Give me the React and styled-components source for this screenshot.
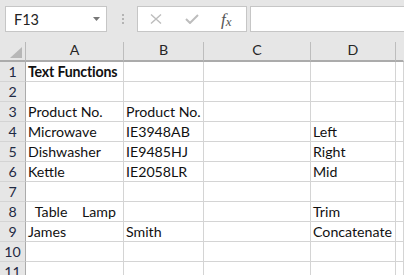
import React from 'react';
import styled, { createGlobalStyle } from 'styled-components';

const Global = createGlobalStyle`
  html, body { margin: 0; padding: 0; background: #e6e6e6; }
  body { font-family: Lato, "Liberation Sans", sans-serif; overflow: hidden; }
`;

const Page = styled.div`
  width: 404px;
  height: 275px;
  overflow: hidden;
  background: #fff;
`;

const Toolbar = styled.div`
  display: flex;
  align-items: flex-start;
  height: 42px;
  box-sizing: border-box;
  padding: 6px 0 0 5px;
  background: #e6e6e6;
`;

const NameBox = styled.div`
  width: 102px;
  height: 26px;
  box-sizing: border-box;
  border: 1px solid #c6c6c6;
  background: #fff;
  display: flex;
  align-items: center;
  justify-content: space-between;
  padding: 0 6px 0 8px;
  font-size: 14.5px;
  color: #222;
`;

const Dots = styled.div`
  margin: 8px 13px 0 15px;
  display: flex;
  flex-direction: column;
  gap: 2px;
  span {
    width: 2px;
    height: 2px;
    background: #b4b4b4;
  }
`;

const ButtonBox = styled.div`
  width: 110px;
  height: 26px;
  box-sizing: border-box;
  border: 1px solid #c6c6c6;
  background: #fff;
  display: flex;
  align-items: center;
  padding-left: 12px;
  gap: 23px;
`;

const FxLabel = styled.span`
  font-family: "Liberation Serif", serif;
  font-style: italic;
  font-size: 17px;
  line-height: 1;
  color: #555;
  margin-left: -1px;
  sub {
    font-size: 13px;
    vertical-align: -1px;
  }
`;

const FormulaInput = styled.div`
  flex: 1;
  height: 26px;
  margin-left: 3px;
  box-sizing: border-box;
  border: 1px solid #c6c6c6;
  border-right: none;
  background: #fff;
`;

const Grid = styled.div`
  display: grid;
  grid-template-columns: 26px 98px 80px 107px 85px 1fr;
  grid-auto-rows: 20px;
`;

const Corner = styled.div`
  background: #e6e6e6;
  border-right: 1px solid #b9b9b9;
  border-bottom: 2px solid #ababab;
  position: relative;
  svg { position: absolute; right: 3px; bottom: 2px; }
`;

const ColHead = styled.div`
  background: #e6e6e6;
  border-right: 1px solid ${p => (p.$last ? 'transparent' : '#bdbdbd')};
  border-bottom: 2px solid #ababab;
  display: flex;
  align-items: flex-end;
  justify-content: center;
  font-size: 14.2px;
  line-height: 18px;
  color: #262626;
  padding-bottom: 1px;
  box-sizing: border-box;
`;

const RowHead = styled.div`
  background: #e6e6e6;
  border-right: 1px solid #ababab;
  border-bottom: 1px solid #d4d4d4;
  display: flex;
  align-items: flex-end;
  justify-content: center;
  font-size: 14.2px;
  line-height: 18px;
  color: #1f2a44;
  box-sizing: border-box;
`;

const Cell = styled.div`
  border-right: 1px solid #d4d4d4;
  border-bottom: 1px solid #d4d4d4;
  display: flex;
  align-items: flex-end;
  padding-left: 2px;
  font-size: 14.2px;
  line-height: 18px;
  font-weight: ${p => (p.$bold ? 700 : 400)};
  letter-spacing: ${p => (p.$bold ? '-0.2px' : '0')};
  white-space: pre;
  overflow: visible;
  color: #111;
  box-sizing: border-box;
`;

const cols = ['A', 'B', 'C', 'D', ''];

const rows = [
  [{ t: 'Text Functions', b: true }, '', '', '', ''],
  ['', '', '', '', ''],
  ['Product No.', 'Product No.', '', '', ''],
  ['Microwave', 'IE3948AB', '', 'Left', ''],
  ['Dishwasher', 'IE9485HJ', '', 'Right', ''],
  ['Kettle', 'IE2058LR', '', 'Mid', ''],
  ['', '', '', '', ''],
  ['  Table    Lamp', '', '', 'Trim', ''],
  ['James', 'Smith', '', 'Concatenate', ''],
  ['', '', '', '', ''],
  ['', '', '', '', ''],
];

export default function App() {
  return (
    <Page>
      <Global />
      <Toolbar>
        <NameBox>
          <span>F13</span>
          <svg width="7" height="4" viewBox="0 0 7 4">
            <path d="M0 0 H7 L3.5 4 Z" fill="#777" />
          </svg>
        </NameBox>
        <Dots>
          <span />
          <span />
          <span />
        </Dots>
        <ButtonBox>
          <svg width="12" height="10" viewBox="0 0 12 10">
            <path d="M1 0.5 L11 9.5 M11 0.5 L1 9.5" stroke="#bdbdbd" strokeWidth="1.4" fill="none" />
          </svg>
          <svg width="14" height="10" viewBox="0 0 14 10">
            <path d="M1 5 L5 9 L13 1" stroke="#bdbdbd" strokeWidth="2" fill="none" />
          </svg>
          <FxLabel>
            f<sub>x</sub>
          </FxLabel>
        </ButtonBox>
        <FormulaInput />
      </Toolbar>
      <Grid>
        <Corner>
          <svg width="12" height="11" viewBox="0 0 12 11">
            <path d="M12 0 V11 H0 Z" fill="#b7b7b7" />
          </svg>
        </Corner>
        {cols.map((c, i) => (
          <ColHead key={i} $last={i === cols.length - 1}>
            {c}
          </ColHead>
        ))}
        {rows.map((r, ri) => (
          <React.Fragment key={ri}>
            <RowHead>{ri + 1}</RowHead>
            {r.map((v, ci) => {
              const t = typeof v === 'string' ? v : v.t;
              const b = typeof v === 'object' && v.b;
              return (
                <Cell key={ci} $bold={b}>
                  {t}
                </Cell>
              );
            })}
          </React.Fragment>
        ))}
      </Grid>
    </Page>
  );
}
